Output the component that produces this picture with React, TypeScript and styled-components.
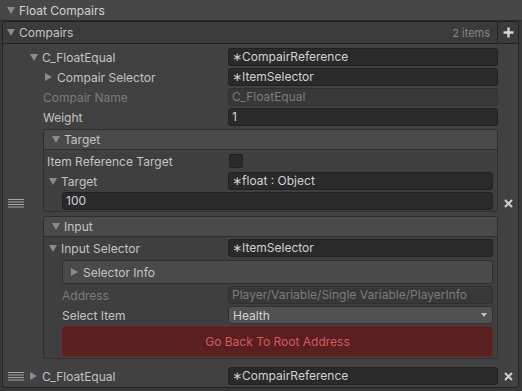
import React from "react";
import styled, { createGlobalStyle, css } from "styled-components";

const GlobalStyle = createGlobalStyle`
  html, body {
    margin: 0;
    padding: 0;
    background: #383838;
  }
  body {
    font-family: Inter, "Noto Sans", "DejaVu Sans", sans-serif;
    font-size: 12px;
    color: #c4c4c4;
  }
  * {
    box-sizing: border-box;
  }
`;

const Inspector = styled.div`
  width: 522px;
  height: 391px;
  overflow: hidden;
  background: #383838;
`;

const SectionHeader = styled.div`
  height: 21px;
  display: flex;
  align-items: center;
  padding-left: 7px;
  background: #474747;
  border-bottom: 1px solid #2d2d2d;
  color: #d2d2d2;
`;

const ArrowBox = styled.span<{ $w?: number }>`
  display: inline-flex;
  align-items: center;
  width: ${(p) => p.$w ?? 12}px;
  flex: 0 0 auto;
`;

const Tri = styled.span<{ $open?: boolean }>`
  display: inline-block;
  width: 0;
  height: 0;
  ${(p) =>
    p.$open
      ? css`
          border-left: 4px solid transparent;
          border-right: 4px solid transparent;
          border-top: 7px solid #8a8a8a;
        `
      : css`
          border-top: 4px solid transparent;
          border-bottom: 4px solid transparent;
          border-left: 7px solid #8a8a8a;
        `}
`;

const ListFrame = styled.div`
  margin-left: 2px;
  width: 517px;
`;

const ListHeader = styled.div`
  height: 23px;
  display: flex;
  align-items: stretch;
  background: #3b3b3b;
  border: 1px solid #242424;
  border-radius: 3px 3px 0 0;
`;

const ListTitle = styled.div`
  flex: 1;
  display: flex;
  align-items: center;
  padding-left: 4px;
`;

const ItemCount = styled.div`
  display: flex;
  align-items: center;
  padding-right: 7px;
  color: #858585;
  font-size: 11px;
`;

const AddButton = styled.div`
  width: 21px;
  display: flex;
  align-items: center;
  justify-content: center;
  border-left: 1px solid #242424;
`;

const ListBody = styled.div`
  background: #414141;
  border: 1px solid #242424;
  border-top: none;
  border-radius: 0 0 3px 3px;
  padding: 4px 0 2px 0;
`;

const Element = styled.div<{ $mb?: number }>`
  display: flex;
  align-items: center;
  margin-bottom: ${(p) => p.$mb ?? 0}px;
`;

const HandleCol = styled.div`
  width: 26px;
  flex: 0 0 auto;
  padding-left: 5px;
  display: flex;
  align-items: center;
`;

const ElementContent = styled.div`
  flex: 1;
  min-width: 0;
  display: flex;
  flex-direction: column;
  gap: 2px;
`;

const RemoveCol = styled.div`
  width: 20px;
  flex: 0 0 auto;
  display: flex;
  align-items: center;
  justify-content: center;
`;

const Row = styled.div<{ $labelWidth: number }>`
  display: grid;
  grid-template-columns: ${(p) => p.$labelWidth}px 1fr;
  align-items: center;
  height: 18px;
`;

const Label = styled.div<{ $indent?: number; $disabled?: boolean }>`
  display: flex;
  align-items: center;
  padding-left: ${(p) => p.$indent ?? 0}px;
  color: ${(p) => (p.$disabled ? "#7b7b7b" : "#c4c4c4")};
  white-space: nowrap;
`;

const Field = styled.div<{ $disabled?: boolean; $indent?: number }>`
  height: 18px;
  margin-left: ${(p) => p.$indent ?? 0}px;
  padding: 0 3px;
  line-height: 16px;
  border-radius: 3px;
  border: 1px solid ${(p) => (p.$disabled ? "#303030" : "#212121")};
  background: ${(p) => (p.$disabled ? "#383838" : "#2a2a2a")};
  color: ${(p) => (p.$disabled ? "#7b7b7b" : "#d2d2d2")};
  white-space: nowrap;
  overflow: hidden;
`;

const Dropdown = styled.div`
  height: 18px;
  display: flex;
  align-items: center;
  justify-content: space-between;
  padding: 0 5px 0 4px;
  border-radius: 3px;
  border: 1px solid #303030;
  background: #515151;
  color: #d2d2d2;
`;

const DropArrow = styled.span`
  width: 0;
  height: 0;
  border-left: 3.5px solid transparent;
  border-right: 3.5px solid transparent;
  border-top: 4px solid #c4c4c4;
`;

const Checkbox = styled.div`
  width: 14px;
  height: 14px;
  margin-left: 1px;
  border-radius: 2px;
  border: 1px solid #212121;
  background: #2a2a2a;
`;

const Box = styled.div<{ $mt?: number }>`
  margin-left: 14px;
  margin-top: ${(p) => p.$mt ?? 0}px;
  border: 1px solid #2f2f2f;
  border-radius: 3px;
  background: #3f3f3f;
`;

const BoxHeader = styled.div`
  height: 20px;
  display: flex;
  align-items: center;
  padding-left: 8px;
  background: #4a4a4a;
  border-bottom: 1px solid #2f2f2f;
  border-radius: 2px 2px 0 0;
`;

const BoxBody = styled.div`
  padding: 2px 4px 1px 3px;
  display: flex;
  flex-direction: column;
  gap: 2px;
`;

const SubFoldout = styled.div`
  margin-left: 15px;
  margin-top: 1px;
  height: 24px;
  display: flex;
  align-items: center;
  padding-left: 8px;
  border: 1px solid #2f2f2f;
  border-radius: 3px;
  background: #4a4a4a;
`;

const DangerButton = styled.div`
  margin-left: 15px;
  height: 31px;
  display: flex;
  align-items: center;
  justify-content: center;
  border: 1px solid #6a2424;
  border-radius: 3px;
  background: #5a1f1f;
  color: #d65a5a;
`;

const Handle = () => (
  <svg width="16" height="9" viewBox="0 0 16 9">
    {[0, 2.5, 5, 7.5].map((y) => (
      <rect key={y} x="0" y={y} width="16" height="1" fill="#a6a6a6" />
    ))}
  </svg>
);

const RemoveIcon = () => (
  <svg width="9" height="9" viewBox="0 0 9 9">
    <path d="M1 1 L8 8 M8 1 L1 8" stroke="#cfcfcf" strokeWidth="2" />
  </svg>
);

const PlusIcon = () => (
  <svg width="11" height="11" viewBox="0 0 11 11">
    <path d="M5.5 0.5 V10.5 M0.5 5.5 H10.5" stroke="#d4d4d4" strokeWidth="2.4" />
  </svg>
);

const Foldout = ({ open, children }: { open?: boolean; children: React.ReactNode }) => (
  <>
    <ArrowBox>
      <Tri $open={open} />
    </ArrowBox>
    {children}
  </>
);

const REF = "\u2217";

export default function App() {
  return (
    <Inspector>
      <GlobalStyle />
      <SectionHeader>
        <Foldout open>Float Compairs</Foldout>
      </SectionHeader>

      <ListFrame>
        <ListHeader>
          <ListTitle>
            <Foldout open>Compairs</Foldout>
          </ListTitle>
          <ItemCount>2 items</ItemCount>
          <AddButton>
            <PlusIcon />
          </AddButton>
        </ListHeader>

        <ListBody>
          <Element $mb={8}>
            <HandleCol>
              <Handle />
            </HandleCol>
            <ElementContent>
              <Row $labelWidth={199}>
                <Label $indent={1}>
                  <Foldout open>C_FloatEqual</Foldout>
                </Label>
                <Field>{REF}CompairReference</Field>
              </Row>
              <Row $labelWidth={199}>
                <Label $indent={16}>
                  <Foldout>Compair Selector</Foldout>
                </Label>
                <Field>{REF}ItemSelector</Field>
              </Row>
              <Row $labelWidth={199}>
                <Label $indent={14} $disabled>
                  Compair Name
                </Label>
                <Field $disabled>C_FloatEqual</Field>
              </Row>
              <Row $labelWidth={199}>
                <Label $indent={14}>Weight</Label>
                <Field>1</Field>
              </Row>

              <Box $mt={1}>
                <BoxHeader>
                  <Foldout open>Target</Foldout>
                </BoxHeader>
                <BoxBody>
                  <Row $labelWidth={181}>
                    <Label>Item Reference Target</Label>
                    <Checkbox />
                  </Row>
                  <Row $labelWidth={181}>
                    <Label $indent={2}>
                      <Foldout open>Target</Foldout>
                    </Label>
                    <Field>{REF}float : Object</Field>
                  </Row>
                  <Field $indent={15}>100</Field>
                </BoxBody>
              </Box>

              <Box $mt={2}>
                <BoxHeader>
                  <Foldout open>Input</Foldout>
                </BoxHeader>
                <BoxBody>
                  <Row $labelWidth={181}>
                    <Label $indent={2}>
                      <Foldout open>Input Selector</Foldout>
                    </Label>
                    <Field>{REF}ItemSelector</Field>
                  </Row>
                  <SubFoldout>
                    <Foldout>Selector Info</Foldout>
                  </SubFoldout>
                  <Row $labelWidth={181}>
                    <Label $indent={15} $disabled>
                      Address
                    </Label>
                    <Field $disabled>Player/Variable/Single Variable/PlayerInfo</Field>
                  </Row>
                  <Row $labelWidth={181}>
                    <Label $indent={15}>Select Item</Label>
                    <Dropdown>
                      Health
                      <DropArrow />
                    </Dropdown>
                  </Row>
                  <DangerButton>Go Back To Root Address</DangerButton>
                </BoxBody>
              </Box>
            </ElementContent>
            <RemoveCol>
              <RemoveIcon />
            </RemoveCol>
          </Element>

          <Element>
            <HandleCol>
              <Handle />
            </HandleCol>
            <ElementContent>
              <Row $labelWidth={199}>
                <Label $indent={1}>
                  <Foldout>C_FloatEqual</Foldout>
                </Label>
                <Field>{REF}CompairReference</Field>
              </Row>
            </ElementContent>
            <RemoveCol>
              <RemoveIcon />
            </RemoveCol>
          </Element>
        </ListBody>
      </ListFrame>
    </Inspector>
  );
}
